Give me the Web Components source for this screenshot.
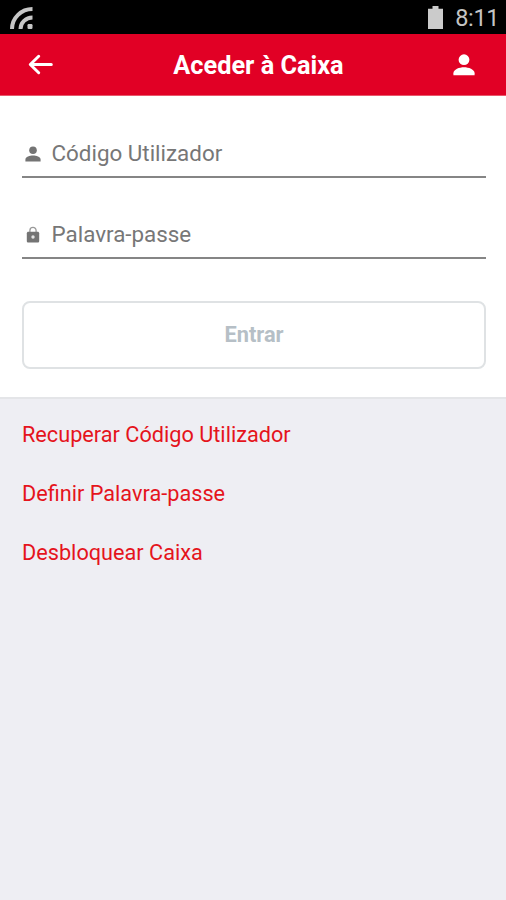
<!DOCTYPE html>
<html lang="pt">
<head>
<meta charset="utf-8">
<title>Aceder à Caixa</title>
<style>
  body {
    margin: 0;
    background: #eeeef3;
    font-family: Roboto, sans-serif;
  }
</style>
</head>
<body>
<login-screen></login-screen>

<script>
const icons = {
  back: `<svg width="26" height="22" viewBox="0 0 26 22" fill="none" stroke="#fff" stroke-width="3" stroke-linecap="round" stroke-linejoin="round"><path d="M10.7 2.3 2.3 10.5l8.4 8.2M2.8 10.5H23.3"/></svg>`,
  account: `<svg width="22" height="22" viewBox="0 0 22 22" fill="#fff"><circle cx="11" cy="5.7" r="5.4"/><path d="M.4 21.3v-2.1c0-3.9 6-6 10.6-6s10.6 2.1 10.6 6v2.100z"/></svg>`,
  user: `<svg width="16" height="16" viewBox="0 0 16 16" fill="#747474"><circle cx="8" cy="4.2" r="3.8"/><path d="M.4 15.4v-1.700c0-2.800 4.400-4.100 7.600-4.100s7.600 1.300 7.600 4.100v1.700z"/></svg>`,
  lock: `<svg width="16" height="17" viewBox="0 0 16 17"><path d="M4.900 6.800V4.400a3.100 3.100 0 0 1 6.200 0v2.400" fill="none" stroke="#999" stroke-width="1.300"/><path d="M3.400 5.700h9.200c.9 0 1.600.7 1.600 1.500v7.700c0 .9-.7 1.600-1.600 1.600H3.400c-.9 0-1.600-.7-1.600-1.600V7.200c0-.8.7-1.500 1.600-1.500z" fill="#747474"/><circle cx="8" cy="11" r="1.700" fill="#e4e4e4"/></svg>`,
  cast: `<svg width="24" height="22" viewBox="0 0 24 22" fill="none" stroke="#c6c6c6" stroke-width="4"><path d="M2 22A20.500 20 0 0 1 22.500 2M10.500 22A12 11.500 0 0 1 22.500 10.500"/><rect x="17.500" y="17" width="5" height="5" rx="1.200" fill="#c6c6c6" stroke="none"/></svg>`,
  battery: `<svg width="15" height="23" viewBox="0 0 15 23" fill="#cbcbcb"><path d="M4.500 0h6v2.700H15V23H0V2.700h4.500z"/></svg>`
};

class StatusBar extends HTMLElement {
  constructor() {
    super();
    this.attachShadow({ mode: 'open' });
  }

  connectedCallback() {
    this.shadowRoot.innerHTML = `
      <style>
        :host {
          display: flex;
          align-items: center;
          justify-content: space-between;
          box-sizing: border-box;
          height: 34px;
          padding: 1px 7px 0 10px;
          background: #000;
          color: #c4c4c4;
          font-size: 23.5px;
          line-height: 33px;
        }
        svg { display: block; }
        div { display: flex; align-items: center; gap: 12px; }
        span { letter-spacing: -0.4px; padding-top: 2px; }
      </style>
      ${icons.cast}
      <div>${icons.battery}<span><slot></slot></span></div>
    `;
  }
}

class AppHeader extends HTMLElement {
  constructor() {
    super();
    this.attachShadow({ mode: 'open' });
  }

  connectedCallback() {
    this.shadowRoot.innerHTML = `
      <style>
        :host {
          display: grid;
          grid-template-columns: 60px 1fr 60px;
          align-items: center;
          box-sizing: border-box;
          height: 62px;
          padding: 0 21px 0 28px;
          background: #e10025;
          border-bottom: 1px solid #e9576b;
          color: #fff;
        }
        svg { display: block; }
        h1 {
          margin: 2px 0 0 4px;
          text-align: center;
          font-size: 25.3px;
          font-weight: 700;
          line-height: 30px;
        }
        .account { justify-self: end; margin-right: 10.5px; margin-top: 1px; }
      </style>
      ${icons.back}
      <h1><slot></slot></h1>
      <div class="account">${icons.account}</div>
    `;
  }
}

class FormField extends HTMLElement {
  constructor() {
    super();
    this.attachShadow({ mode: 'open' });
  }

  connectedCallback() {
    this.shadowRoot.innerHTML = `
      <style>
        :host {
          display: flex;
          align-items: center;
          box-sizing: border-box;
          height: 50px;
          padding: 3px 0 0 3px;
          gap: 10.5px;
          border-bottom: 2px solid #858585;
          color: #777;
          font-size: 22.4px;
          line-height: 30px;
        }
        svg { display: block; }
        span { margin-top: -2px; }
      </style>
      ${icons[this.getAttribute('icon')]}
      <span><slot></slot></span>
    `;
  }
}

class SubmitButton extends HTMLElement {
  constructor() {
    super();
    this.attachShadow({ mode: 'open' });
  }

  connectedCallback() {
    this.shadowRoot.innerHTML = `
      <style>
        :host { display: block; }
        button {
          display: block;
          box-sizing: border-box;
          width: 100%;
          height: 68px;
          padding: 0 0 2px;
          border: 2px solid #dfe2e4;
          border-radius: 8px;
          background: #fff;
          color: #b6bfc6;
          font: 700 21.8px Roboto, sans-serif;
        }
      </style>
      <button><slot></slot></button>
    `;
  }
}

class LinkItem extends HTMLElement {
  constructor() {
    super();
    this.attachShadow({ mode: 'open' });
  }

  connectedCallback() {
    this.shadowRoot.innerHTML = `
      <style>
        :host {
          display: block;
          color: #e5141c;
          font-size: 21.7px;
          line-height: 30px;
        }
      </style>
      <slot></slot>
    `;
  }
}

class LoginScreen extends HTMLElement {
  constructor() {
    super();
    this.attachShadow({ mode: 'open' });
  }

  connectedCallback() {
    this.shadowRoot.innerHTML = `
      <style>
        :host {
          display: flex;
          flex-direction: column;
          height: 900px;
          overflow: hidden;
        }
        form {
          box-sizing: border-box;
          height: 301px;
          padding: 32px 20px 0 22px;
          background: #fff;
        }
        form-field + form-field { margin-top: 31px; }
        submit-button { margin-top: 42px; }
        nav {
          flex: 1;
          display: flex;
          flex-direction: column;
          gap: 29px;
          padding: 21px 22px;
          border-top: 2px solid #e4e5e8;
        }
      </style>
      <status-bar>8:11</status-bar>
      <app-header>Aceder à Caixa</app-header>
      <form>
        <form-field icon="user">Código Utilizador</form-field>
        <form-field icon="lock">Palavra-passe</form-field>
        <submit-button>Entrar</submit-button>
      </form>
      <nav>
        <link-item>Recuperar Código Utilizador</link-item>
        <link-item>Definir Palavra-passe</link-item>
        <link-item>Desbloquear Caixa</link-item>
      </nav>
    `;
  }
}

customElements.define('status-bar', StatusBar);
customElements.define('app-header', AppHeader);
customElements.define('form-field', FormField);
customElements.define('submit-button', SubmitButton);
customElements.define('link-item', LinkItem);
customElements.define('login-screen', LoginScreen);
</script>
</body>
</html>
